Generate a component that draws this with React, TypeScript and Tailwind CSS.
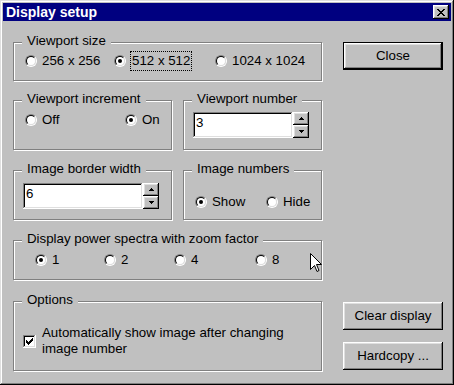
import React from "react";

const raised =
  "shadow-[inset_-1px_-1px_0_#000,inset_1px_1px_0_#fff,inset_-2px_-2px_0_#808080,inset_2px_2px_0_#dfdfdf]";
const sunken =
  "shadow-[inset_-1px_-1px_0_#fff,inset_1px_1px_0_#808080,inset_-2px_-2px_0_#dfdfdf,inset_2px_2px_0_#000]";

function Group({
  label,
  className,
  children,
}: {
  label: string;
  className: string;
  children?: React.ReactNode;
}) {
  return (
    <div
      className={
        "relative border border-[#808080] shadow-[inset_1px_1px_0_#fff,1px_1px_0_#fff] " +
        className
      }
    >
      <span className="absolute left-[8px] top-[-10px] px-[5px] bg-[#c0c0c0] leading-[16px] whitespace-nowrap">
        {label}
      </span>
      {children}
    </div>
  );
}

function Radio({ checked }: { checked?: boolean }) {
  return (
    <div className="w-[12px] h-[12px] shrink-0 rounded-full border border-t-[#808080] border-l-[#808080] border-r-white border-b-white">
      <div className="w-full h-full rounded-full border border-t-black border-l-black border-r-[#dfdfdf] border-b-[#dfdfdf] bg-white flex items-center justify-center">
        {checked && <div className="w-[4px] h-[4px] rounded-full bg-black" />}
      </div>
    </div>
  );
}

function RadioItem({
  label,
  checked,
  focus,
  className,
}: {
  label: string;
  checked?: boolean;
  focus?: boolean;
  className?: string;
}) {
  return (
    <div className={"flex items-center h-[16px] " + (className ?? "")}>
      <Radio checked={checked} />
      {focus ? (
        <span className="ml-[4px] border border-dotted border-black px-[1px] py-[1px] leading-[16px] whitespace-nowrap">
          {label}
        </span>
      ) : (
        <span className="ml-[5px] leading-[16px] whitespace-nowrap">{label}</span>
      )}
    </div>
  );
}

function Arrow({ up }: { up?: boolean }) {
  return (
    <svg width="5" height="3" viewBox="0 0 5 3" shapeRendering="crispEdges">
      {up ? (
        <>
          <rect x="2" y="0" width="1" height="1" fill="#000" />
          <rect x="1" y="1" width="3" height="1" fill="#000" />
          <rect x="0" y="2" width="5" height="1" fill="#000" />
        </>
      ) : (
        <>
          <rect x="0" y="0" width="5" height="1" fill="#000" />
          <rect x="1" y="1" width="3" height="1" fill="#000" />
          <rect x="2" y="2" width="1" height="1" fill="#000" />
        </>
      )}
    </svg>
  );
}

function SpinBox({ value, width }: { value: string; width: string }) {
  return (
    <div className="flex">
      <div className={"h-[26px] bg-white pl-[3px] pt-[3px] leading-[16px] " + sunken + " " + width}>
        {value}
      </div>
      <div className="w-[16px] h-[26px] flex flex-col">
        <div className={"h-[13px] bg-[#c0c0c0] flex items-center justify-center " + raised}>
          <Arrow up />
        </div>
        <div className={"h-[13px] bg-[#c0c0c0] flex items-center justify-center " + raised}>
          <Arrow />
        </div>
      </div>
    </div>
  );
}

function Button({ label, isDefault }: { label: string; isDefault?: boolean }) {
  return (
    <div
      className={
        "h-[28px] w-[100px] bg-[#c0c0c0] flex items-center justify-center leading-[16px] " +
        raised +
        (isDefault ? " border border-black" : "")
      }
    >
      {label}
    </div>
  );
}

export default function App() {
  return (
    <div className="relative w-[454px] h-[385px] bg-[#c0c0c0] p-[3px] flex flex-col text-[13.3px] text-black font-['Liberation_Sans',Arial,sans-serif] shadow-[inset_-1px_-1px_0_#000,inset_1px_1px_0_#dfdfdf,inset_-2px_-2px_0_#808080,inset_2px_2px_0_#fff]">
      {/* Title bar */}
      <div className="h-[18px] bg-[#000080] flex items-center justify-between pl-[3px] pr-[2px]">
        <span className="text-white font-bold text-[14px] leading-[18px]">Display setup</span>
        <div className={"w-[16px] h-[14px] bg-[#c0c0c0] flex items-center justify-center " + raised}>
          <svg width="8" height="7" viewBox="0 0 8 7" shapeRendering="crispEdges">
            <rect x="0" y="0" width="2" height="1" />
            <rect x="6" y="0" width="2" height="1" />
            <rect x="1" y="1" width="2" height="1" />
            <rect x="5" y="1" width="2" height="1" />
            <rect x="2" y="2" width="4" height="1" />
            <rect x="3" y="3" width="2" height="1" />
            <rect x="2" y="4" width="4" height="1" />
            <rect x="1" y="5" width="2" height="1" />
            <rect x="5" y="5" width="2" height="1" />
            <rect x="0" y="6" width="2" height="1" />
            <rect x="6" y="6" width="2" height="1" />
          </svg>
        </div>
      </div>

      {/* Body */}
      <div className="flex pt-[21px] pl-[10px]">
        <div className="w-[309px] flex flex-col">
          <Group label="Viewport size" className="w-[309px] h-[39px] pl-[11px] pt-[10px]">
            <div className="flex">
              <RadioItem label="256 x 256" className="w-[89px]" />
              <RadioItem label="512 x 512" checked focus className="w-[101px]" />
              <RadioItem label="1024 x 1024" />
            </div>
          </Group>

          <div className="flex gap-[11px] mt-[19px]">
            <Group label="Viewport increment" className="w-[159px] h-[50px] pl-[11px] pt-[11px]">
              <div className="flex">
                <RadioItem label="Off" className="w-[100px]" />
                <RadioItem label="On" checked />
              </div>
            </Group>
            <Group label="Viewport number" className="w-[139px] h-[50px] pl-[9px] pt-[11px]">
              <SpinBox value="3" width="w-[100px]" />
            </Group>
          </div>

          <div className="flex gap-[11px] mt-[20px]">
            <Group label="Image border width" className="w-[159px] h-[50px] pl-[9px] pt-[12px]">
              <SpinBox value="6" width="w-[120px]" />
            </Group>
            <Group label="Image numbers" className="w-[139px] h-[50px] pl-[11px] pt-[23px]">
              <div className="flex">
                <RadioItem label="Show" checked className="w-[71px]" />
                <RadioItem label="Hide" />
              </div>
            </Group>
          </div>

          <Group
            label="Display power spectra with zoom factor"
            className="mt-[20px] w-[309px] h-[40px] pl-[21px] pt-[11px]"
          >
            <div className="flex">
              <RadioItem label="1" checked className="w-[69px]" />
              <RadioItem label="2" className="w-[70px]" />
              <RadioItem label="4" className="w-[81px]" />
              <RadioItem label="8" />
            </div>
          </Group>

          <Group label="Options" className="mt-[21px] w-[309px] h-[70px] pl-[9px] pt-[23px]">
            <div className="flex items-center">
              <div className={"w-[13px] h-[13px] shrink-0 bg-white flex items-center justify-center " + sunken}>
                <svg width="7" height="7" viewBox="0 0 7 7" shapeRendering="crispEdges">
                  <rect x="6" y="0" width="1" height="3" />
                  <rect x="5" y="1" width="1" height="3" />
                  <rect x="4" y="2" width="1" height="3" />
                  <rect x="3" y="3" width="1" height="3" />
                  <rect x="2" y="4" width="1" height="3" />
                  <rect x="1" y="3" width="1" height="3" />
                  <rect x="0" y="2" width="1" height="3" />
                </svg>
              </div>
              <span className="ml-[6px] leading-[16px]">
                Automatically show image after changing
                <br />
                image number
              </span>
            </div>
          </Group>
        </div>

        <div className="ml-[21px] w-[100px] flex flex-col">
          <Button label="Close" isDefault />
          <div className="mt-auto">
            <Button label="Clear display" />
          </div>
          <div className="mt-[12px] mb-[1px]">
            <Button label="Hardcopy ..." />
          </div>
        </div>
      </div>

      {/* Mouse cursor */}
      <svg
        className="absolute left-[310px] top-[253px]"
        width="12"
        height="20"
        viewBox="0 0 12 20"
      >
        <path
          d="M0.5 0.5 L0.5 16.5 L4.5 12.5 L7 18.5 L9 17.5 L6.5 11.5 L11.5 11.5 Z"
          fill="#fff"
          stroke="#000"
          strokeWidth="1"
        />
      </svg>
    </div>
  );
}
